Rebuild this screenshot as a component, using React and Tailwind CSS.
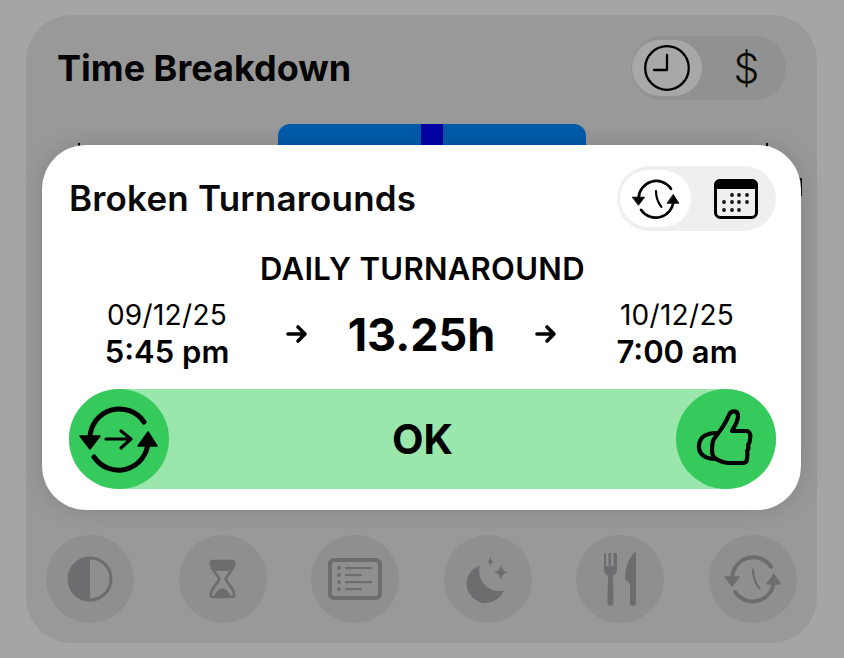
const font = { fontFamily: '"Inter", "Liberation Sans", sans-serif' };

function Cycle({ stroke = 4, fill = "#000", hand = "arrow", handWidth }) {
  return (
    <svg viewBox="0 0 100 100" className="w-full h-full" fill="none" stroke={fill} strokeLinecap="round">
      <path d="M21 49 A29.5 29.5 0 0 1 75 33" strokeWidth={stroke} />
      <path d="M25 68 A29.5 29.5 0 0 0 79 53" strokeWidth={stroke} />
      <path d="M11 47 H31 L21 60 Z" fill={fill} stroke={fill} strokeWidth="1.5" strokeLinejoin="round" />
      <path d="M69 57 H88 L79 43 Z" fill={fill} stroke={fill} strokeWidth="1.5" strokeLinejoin="round" />
      {hand === "arrow" ? (
        <path d="M37 50 H62 M52 42 L62 50 L52 59" strokeWidth="3.2" strokeLinejoin="round" />
      ) : (
        <path d="M50 37 C50 47 52 54 59 63" strokeWidth={handWidth || stroke} />
      )}
    </svg>
  );
}

function Thumb() {
  return (
    <svg viewBox="0 0 100 100" className="w-full h-full" fill="none" stroke="#000" strokeWidth="4.2" strokeLinecap="round" strokeLinejoin="round">
      <path d="M38 50 C44 42 49 36 53 26 C55 21 62 21 62 27 C62 33 58 38 56 42 H70 C74 42 75 46 74 50 C74 53 73 55 72 56 C73 59 72 61 71 62 C72 66 71 68 71 70 C71 73 69 74 66 74 H52 C46 74 43 71 40 70 C37 68 36 66 36 62 C36 57 36 53 38 50 Z" />
      <path d="M40 44 C32 44 24 47 23 56 C22 65 29 70 40 70" />
    </svg>
  );
}

function Calendar() {
  const dots = [[18,16],[25,16],[33,16],[10,23],[18,23],[25,23],[33,23],[10,31],[18,31],[25,31]];
  return (
    <svg viewBox="0 0 44 40" className="w-[44px] h-[40px]">
      <rect x="1.5" y="1.5" width="41" height="37" rx="5" fill="#efefef" stroke="#000" strokeWidth="3" />
      <path d="M0 10 V6 A6 6 0 0 1 6 0 H38 A6 6 0 0 1 44 6 V10 Z" fill="#000" />
      {dots.map(([x, y]) => <circle key={`${x}-${y}`} cx={x} cy={y} r="1.9" fill="#111" />)}
    </svg>
  );
}

const ic = "#6d6d6f";

function Contrast() {
  return (
    <svg viewBox="0 0 46 46" className="w-[46px] h-[46px]">
      <circle cx="23" cy="23" r="21" fill="none" stroke={ic} strokeWidth="3" />
      <path d="M23 1 A22 22 0 0 0 23 45 Z" fill={ic} />
    </svg>
  );
}
function Hourglass() {
  return (
    <svg viewBox="0 0 30 44" className="w-[27px] h-[42px]">
      <path d="M4 2 H26 C27.5 2 28 3 28 4 C28 12 20 17 18.5 22 C20 27 28 32 28 40 C28 41 27.5 42 26 42 H4 C2.5 42 2 41 2 40 C2 32 10 27 11.5 22 C10 17 2 12 2 4 C2 3 2.5 2 4 2 Z" fill="none" stroke={ic} strokeWidth="3" />
      <path d="M3 3 H27 C27 8 24 11 22 13 H8 C6 11 3 8 3 3 Z M6 41 C7 36 12 33 15 32 C18 33 23 36 24 41 Z" fill={ic} />
    </svg>
  );
}
function ListCard() {
  return (
    <svg viewBox="0 0 54 42" className="w-[54px] h-[42px]">
      <rect x="2" y="2" width="50" height="38" rx="4" fill="none" stroke={ic} strokeWidth="4" />
      {[10, 17, 24, 31].map((y, i) => (
        <g key={y}>
          <circle cx="11" cy={y} r="2" fill={ic} />
          <rect x="17" y={y - 1} width={i % 2 ? 17 : 27} height="2.2" fill={ic} />
        </g>
      ))}
    </svg>
  );
}
function Moon() {
  return (
    <svg viewBox="0 0 48 50" className="w-[47px] h-[48px]">
      <path d="M16 11 A20 20 0 1 0 41 37 A21 21 0 0 1 16 11 Z" fill={ic} />
      <path d="M27 1 C27.6 5 28 6 31 7 C28 8 27.6 9 27 13 C26.4 9 26 8 23 7 C26 6 26.4 5 27 1 Z" fill={ic} />
      <path d="M38 9 C39 15 40 17 46 18 C40 19 39 21 38 27 C37 21 36 19 30 18 C36 17 37 15 38 9 Z" fill={ic} />
    </svg>
  );
}
function Cutlery() {
  return (
    <svg viewBox="0 0 34 54" className="w-[34px] h-[54px]" fill={ic}>
      <path d="M1 1 H3 V14 H5.5 V1 H8 V14 H10.5 V1 H13 C14 1 14 2 14 3 V17 C14 21 11.5 23 10 24 L10.5 51 C10.5 53 9 54 7.5 54 C6 54 4.5 53 4.5 51 L5 24 C3 23 1 21 1 17 Z" />
      <path d="M32 0 C33 0 33 1 33 2 V51 C33 53 31.5 54 30 54 C28.5 54 27 53 27 51 V32 L23 28 C22 27 22 26 22 25 C23 14 26 5 32 0 Z" />
    </svg>
  );
}

function Circle({ children }) {
  return (
    <div className="w-[88px] h-[88px] rounded-full bg-[#8f8f90] flex items-center justify-center">{children}</div>
  );
}

function TimeCol({ date, time }) {
  return (
    <div className="w-[140px] flex flex-col items-center">
      <span className="text-[28px] leading-[36px] font-normal tracking-[0.3px]">{date}</span>
      <span className="text-[31px] leading-[38px] font-semibold">{time}</span>
    </div>
  );
}

function Arrow() {
  return (
    <svg viewBox="0 0 24 20" className="w-[24px] h-[20px]" fill="none" stroke="#000" strokeWidth="3.6" strokeLinecap="round" strokeLinejoin="round">
      <path d="M3 10 H20 M13 3 L20 10 L13 17" />
    </svg>
  );
}

export default function App() {
  return (
    <div style={font} className="relative w-[844px] h-[658px] overflow-hidden bg-[#a5a5a5] pt-[15px] px-[26px] text-black">
      <div className="relative h-[628px] w-[791px] rounded-[46px] bg-[#999999] px-[20px] flex flex-col">
        <div className="flex items-start justify-between pt-[21px] pl-[12px] pr-[11px]">
          <h1 className="text-[36px] leading-[64px] font-bold text-[#050505] ml-[-1px]">Time Breakdown</h1>
          <div className="w-[155px] h-[64px] rounded-full bg-[#919191] flex items-center pl-[1px]">
            <div className="w-[70px] h-[56px] rounded-full bg-[#a8a8a8] flex items-center justify-center">
              <svg viewBox="0 0 46 46" className="w-[46px] h-[46px]" fill="none" stroke="#000" strokeWidth="2.3" strokeLinecap="round" strokeLinejoin="round">
                <circle cx="23" cy="23" r="21.8" />
                <path d="M23 10 V25 H10" />
              </svg>
            </div>
            <div className="flex-1 flex items-center justify-center text-[41px] font-light leading-none pl-[5px] text-[#0a0a0a]">$</div>
          </div>
        </div>
        <div className="relative ml-[232px] mt-[24px] w-[308px] h-[40px] rounded-t-[12px] bg-[#005bab] flex justify-center">
          <div className="w-[22px] h-full bg-[#0000a6]" />
        </div>
        <div className="mt-auto mb-[20px] flex justify-between">
          <Circle><Contrast /></Circle>
          <Circle><Hourglass /></Circle>
          <Circle><ListCard /></Circle>
          <Circle><Moon /></Circle>
          <Circle><Cutlery /></Circle>
          <Circle>
            <div className="w-[72px] h-[72px]"><Cycle stroke={5.5} fill={ic} hand="clock" handWidth={3} /></div>
          </Circle>
        </div>
      </div>

      <div className="absolute left-[78px] top-[143px] w-[2px] h-[10px] bg-black" />
      <div className="absolute left-[766px] top-[143px] w-[2px] h-[10px] bg-black" />
      <div className="absolute left-[799px] top-[178px] w-[3px] h-[18px] bg-[#111]" />

      <div className="absolute left-[42px] top-[145px] w-[759px] h-[365px] rounded-[44px] bg-white shadow-[0_0_24px_rgba(0,0,0,0.14)] px-[27px] pt-[21px]">
        <div className="flex items-center justify-between w-[707px]">
          <h2 className="text-[35px] leading-[65px] font-semibold tracking-[0.2px] text-[#0a0a0a]">Broken Turnarounds</h2>
          <div className="w-[159px] h-[65px] rounded-full bg-[#efefef] flex items-center pl-[3px]">
            <div className="w-[71px] h-[57px] rounded-full bg-white flex items-center justify-center">
              <div className="w-[60px] h-[60px]"><Cycle stroke={4.4} hand="clock" handWidth={3.6} /></div>
            </div>
            <div className="flex-1 flex items-center justify-center pl-[4px]"><Calendar /></div>
          </div>
        </div>
        <div className="w-[707px] text-center text-[31px] leading-[36px] font-semibold mt-[20px] tracking-[0.3px]">DAILY TURNAROUND</div>
        <div className="w-[707px] flex items-center mt-[10px] h-[74px]">
          <div className="ml-[28px]"><TimeCol date="09/12/25" time="5:45 pm" /></div>
          <div className="ml-[48px]"><Arrow /></div>
          <div className="w-[225px] text-center text-[45px] leading-none font-bold">13.25h</div>
          <div><Arrow /></div>
          <div className="ml-[49px]"><TimeCol date="10/12/25" time="7:00 am" /></div>
        </div>
        <div className="w-[707px] h-[100px] mt-[18px] rounded-full bg-[#9ae6ac] flex items-center justify-between">
          <div className="w-[100px] h-[100px] rounded-full bg-[#36c95c]"><Cycle stroke={5} /></div>
          <span className="text-[41px] font-bold leading-none">OK</span>
          <div className="w-[100px] h-[100px] rounded-full bg-[#36c95c]"><Thumb /></div>
        </div>
      </div>
    </div>
  );
}
